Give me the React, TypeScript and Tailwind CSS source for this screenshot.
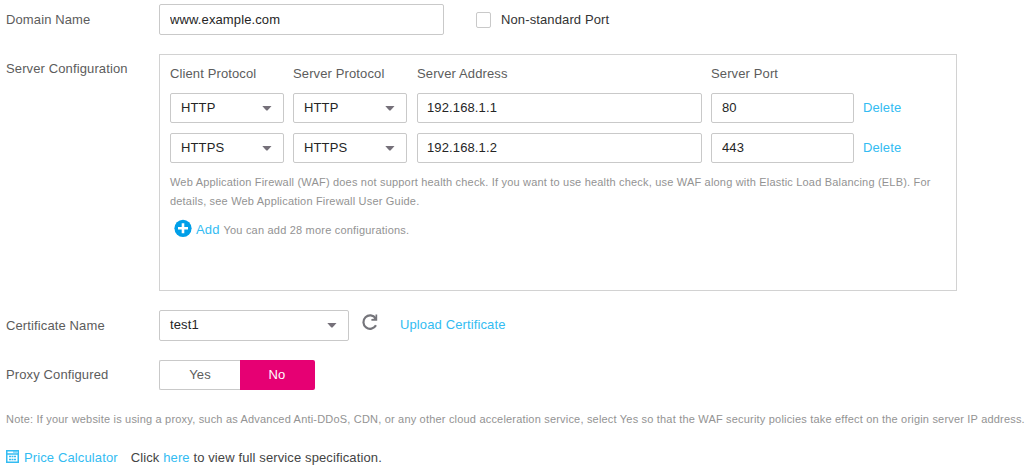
import type { ReactNode } from 'react';

function Caret() {
  return (
    <svg width="10" height="5" viewBox="0 0 10 5" className="mt-px shrink-0 fill-[#757079]">
      <path d="M0.3 0h9.2L5.5 4.6H4.3z" />
    </svg>
  );
}

function Select({ value, className }: { value: string; className: string }) {
  return (
    <button
      type="button"
      className={`flex items-center justify-between rounded-xs border border-[#c9c9c9] bg-white pr-[11px] pl-2.5 text-left tracking-[0.12px] text-[#252525] ${className}`}
    >
      <span>{value}</span>
      <Caret />
    </button>
  );
}

function TextField({ value, label, className }: { value: string; label: string; className: string }) {
  return (
    <input
      aria-label={label}
      defaultValue={value}
      className={`block rounded-xs border border-[#c9c9c9] bg-white tracking-[0.12px] text-[#252525] outline-none ${className}`}
    />
  );
}

function Label({ children, className }: { children: ReactNode; className: string }) {
  return <div className={`w-[153px] shrink-0 leading-4 ${className}`}>{children}</div>;
}

const servers = [
  { protocol: 'HTTP', address: '192.168.1.1', port: '80' },
  { protocol: 'HTTPS', address: '192.168.1.2', port: '443' },
];

export default function App() {
  return (
    <main className="h-[469px] w-[1031px] overflow-hidden bg-white pt-1 pl-1.5 font-['Liberation_Sans',Arial,sans-serif] text-[13px] leading-4 tracking-[0.12px] text-[#5c5c5c]">
      <div className="flex h-[31px]">
        <Label className="pt-2">Domain Name</Label>
        <TextField label="Domain Name" value="www.example.com" className="h-[31px] w-[285px] pl-2.5" />
        <label className="ml-8 flex items-start text-[#333]">
          <span className="mt-2 h-4 w-[15px] rounded-xs border border-[#c9c9c9]" />
          <span className="mt-2 ml-2.5">Non-standard Port</span>
        </label>
      </div>

      <div className="mt-[19px] flex">
        <Label className="pt-[7px]">Server Configuration</Label>
        <section className="h-[237px] w-[798px] border border-[#d2d2d2] pt-[11px] pl-2.5">
          <div className="flex h-[17px]">
            <span className="w-[123px]">Client Protocol</span>
            <span className="w-[124px]">Server Protocol</span>
            <span className="w-[294px]">Server Address</span>
            <span>Server Port</span>
          </div>
          <div className="mt-2.5 flex flex-col gap-2.5">
            {servers.map((server) => (
              <div key={server.address} className="flex h-[30px] items-center">
                <Select value={server.protocol} className="h-[30px] w-[114px]" />
                <Select value={server.protocol} className="ml-[9px] h-[30px] w-[114px]" />
                <TextField label="Server Address" value={server.address} className="ml-2.5 h-[30px] w-[285px] pb-0.5 pl-[9px]" />
                <TextField label="Server Port" value={server.port} className="ml-[9px] h-[30px] w-[143px] pb-0.5 pl-2.5" />
                <a href="#" className="ml-[9px] text-[#33bcf2]">Delete</a>
              </div>
            ))}
          </div>
          <p className="mt-2.5 text-[11px] leading-[19px] tracking-[0.19px] whitespace-nowrap text-[#939393]">
            Web Application Firewall (WAF) does not support health check. If you want to use health check, use WAF along with Elastic Load Balancing (ELB). For
            <br />
            details, see Web Application Firewall User Guide.
          </p>
          <div className="mt-2 flex items-start pl-1">
            <svg width="18" height="18" viewBox="0 0 18 18">
              <circle cx="9" cy="9.3" r="8.6" fill="#009fe8" />
              <path d="M9 4.3v10M4 9.3h10" stroke="white" strokeWidth="2.6" />
            </svg>
            <a href="#" className="mt-[3px] ml-1 text-[#33bcf2]">Add</a>
            <span className="mt-[3px] ml-1 text-[11px] tracking-[0.2px] text-[#939393]">You can add 28 more configurations.</span>
          </div>
        </section>
      </div>

      <div className="mt-[19px] flex h-[31px]">
        <Label className="pt-2">Certificate Name</Label>
        <Select value="test1" className="h-[31px] w-[190px] pb-px" />
        <svg width="18" height="18" viewBox="0 0 18 18" className="mt-[3px] ml-3" fill="none">
          <path d="M14.6 5.2A6.7 6.7 0 1 0 15 12.3" stroke="#75757b" strokeWidth="2.2" />
          <path d="M16.2 1.5v6.2h-5.8V6l2.3-.3 1.8-2V1.5z" fill="#75757b" />
        </svg>
        <a href="#" className="mt-[7px] ml-[21px] text-[#33bcf2]">Upload Certificate</a>
      </div>

      <div className="mt-[19px] flex h-[30px]">
        <Label className="pt-[7px]">Proxy Configured</Label>
        <button type="button" className="w-[81px] rounded-l-xs border border-r-0 border-[#c9c9c9] tracking-[0.12px]">Yes</button>
        <button type="button" className="w-[75px] rounded-r-xs bg-[#e60073] pr-px tracking-[0.12px] text-white">No</button>
      </div>

      <p className="mt-[21px] text-[11px] leading-4 tracking-[0.19px] whitespace-nowrap text-[#939393]">
        Note: If your website is using a proxy, such as Advanced Anti-DDoS, CDN, or any other cloud acceleration service, select Yes so that the WAF security policies take effect on the origin server IP address.
      </p>

      <div className="mt-[22px] flex items-start">
        <svg width="13" height="13" viewBox="0 0 13 13" fill="none" className="mt-px">
          <path d="M.75.75h11.5v11.5H.75zM1 4h11" stroke="#33bcf2" strokeWidth="1.5" />
          <path d="M7 2h4" stroke="#33bcf2" />
          <path d="M3 6.5h2m.5 0h2m.5 0h2M3 9.5h2m.5 0h2m.5 0h2" stroke="#33bcf2" strokeWidth="1.5" />
        </svg>
        <a href="#" className="mt-px ml-[5px] text-[#33bcf2]">Price Calculator</a>
        <span className="mt-px ml-[13px] text-[#444]">
          Click <a href="#" className="text-[#33bcf2]">here</a> to view full service specification.
        </span>
      </div>
    </main>
  );
}
